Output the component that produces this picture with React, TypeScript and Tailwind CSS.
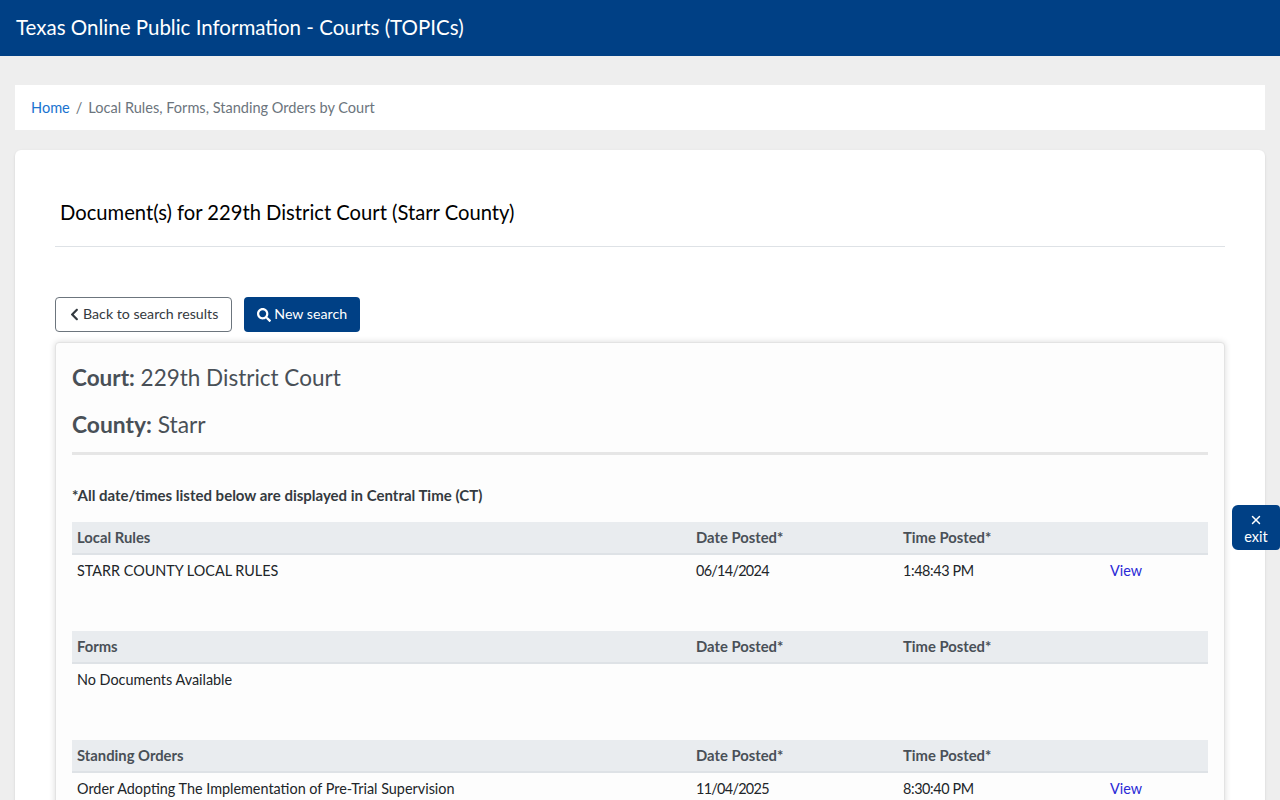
import { FaChevronLeft, FaSearch } from "react-icons/fa";
import { X } from "lucide-react";

const font = "font-['Lato','Noto_Sans',sans-serif]";

type Doc = { name: string; date?: string; time?: string };

const sections: { title: string; docs: Doc[] }[] = [
  {
    title: "Local Rules",
    docs: [{ name: "STARR COUNTY LOCAL RULES", date: "06/14/2024", time: "1:48:43 PM" }],
  },
  { title: "Forms", docs: [{ name: "No Documents Available" }] },
  {
    title: "Standing Orders",
    docs: [
      {
        name: "Order Adopting The Implementation of Pre-Trial Supervision",
        date: "11/04/2025",
        time: "8:30:40 PM",
      },
    ],
  },
];

function DocTable({ title, docs }: { title: string; docs: Doc[] }) {
  return (
    <table className="mb-[45px] w-full table-fixed border-collapse text-[14.4px] text-[#212529]">
      <colgroup>
        <col className="w-[619px]" />
        <col className="w-[207px]" />
        <col className="w-[207px]" />
        <col />
      </colgroup>
      <thead>
        <tr className="h-[32px] border-b-2 border-[#dee2e6] bg-[#e9ecef] text-left text-[14.8px] text-[#495057]">
          <th className="px-[5px] pb-[1px] font-bold">{title}</th>
          <th className="px-[5px] pb-[1px] font-bold">Date Posted*</th>
          <th className="px-[5px] pb-[1px] font-bold">Time Posted*</th>
          <th />
        </tr>
      </thead>
      <tbody>
        {docs.map((d) => (
          <tr key={d.name} className="h-[32px]">
            <td className="px-[5px]">{d.name}</td>
            <td className="px-[5px] tracking-[-0.7px]">{d.date}</td>
            <td className="px-[5px] tracking-[-0.4px]">{d.time}</td>
            <td className="px-[5px]">
              {d.date && (
                <a href="#" className="text-[#2a2ad6]">
                  View
                </a>
              )}
            </td>
          </tr>
        ))}
      </tbody>
    </table>
  );
}

export default function App() {
  return (
    <div className={`${font} min-h-screen bg-[#eeeeee]`}>
      <header className="flex h-14 items-center bg-[#004085] px-4 pb-[2px] text-[20.5px] text-white">
        Texas Online Public Information - Courts (TOPICs)
      </header>

      <main className="px-[15px] pt-[29px]">
        <nav className="flex h-[45px] items-center bg-white px-4 text-[14.55px] text-[#6c757d]">
          <a href="#" className="text-[#1a73d0]">
            Home
          </a>
          <span className="px-[6px]">/</span>
          <span>Local Rules, Forms, Standing Orders by Court</span>
        </nav>

        <section className="mt-5 rounded-md bg-white px-10 pb-10 shadow-sm">
          <div className="flex h-[97px] items-end border-b border-[#dee2e6] pb-[19px] pl-[5px] text-[20.2px] text-black">
            Document(s) for 229th District Court (Starr County)
          </div>

          <div className="mt-[50px] flex gap-3">
            <button className="flex h-[35px] items-center gap-[3px] rounded border border-[#6c757d] bg-white px-[13px] pb-[1px] text-[14.2px] text-[#343a40]">
              <FaChevronLeft size={11} className="mt-[1px] scale-125" />
              Back to search results
            </button>
            <button className="flex h-[35px] items-center gap-[3px] rounded bg-[#004085] px-[13px] pb-[1px] text-[14.2px] text-white">
              <FaSearch size={14} className="mt-[1px]" />
              New search
            </button>
          </div>

          <div className="mt-[10px] rounded-sm border border-[#e3e3e3] bg-[#fdfdfd] px-4 pt-[17px] shadow-[0_0_6px_rgba(0,0,0,0.15)]">
            <h2 className="text-[22.5px] leading-9 text-[#495057]">
              <b>Court:</b> 229th District Court
            </h2>
            <h2 className="mt-[10px] text-[22.8px] leading-9 text-[#495057]">
              <b>County:</b> Starr
            </h2>
            <hr className="mt-[10px] border-t-[3px] border-[#e6e6e6]" />
            <p className="mt-[30px] mb-[17px] text-[15px] leading-5 font-bold text-[#343a40]">
              *All date/times listed below are displayed in Central Time (CT)
            </p>
            {sections.map((s) => (
              <DocTable key={s.title} title={s.title} docs={s.docs} />
            ))}
          </div>
        </section>
      </main>

      <a
        href="#"
        className="fixed top-[505px] right-0 flex h-[45px] w-12 flex-col items-center justify-center gap-[2px] rounded-l-md rounded-r-sm bg-[#004085] pt-[3px] text-[14.5px] leading-4 text-white"
      >
        <X size={14} strokeWidth={2.5} />
        exit
      </a>
    </div>
  );
}
